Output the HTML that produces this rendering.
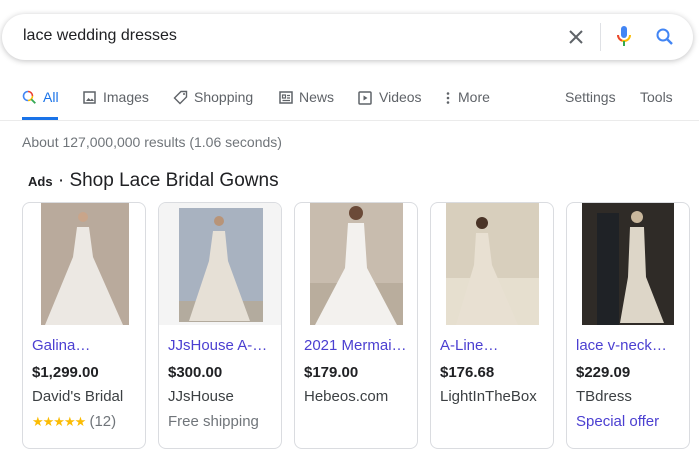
<!DOCTYPE html>
<html><head><meta charset="utf-8"><style>
*{margin:0;padding:0;box-sizing:border-box}
body{width:699px;height:461px;background:#fff;font-family:"Liberation Sans",Arial,sans-serif;position:relative;overflow:hidden;color:#202124}
.abs{position:absolute}
.search{left:2px;top:14px;width:691px;height:46px;border-radius:23px;box-shadow:0 1px 6px rgba(32,33,36,.28);background:#fff}
.tab{top:89px;font-size:14px;color:#5f6368;white-space:nowrap}
.card{top:202px;width:124px;height:247px;border:1px solid #dadce0;border-radius:8px;overflow:hidden;background:#fff}
.card .img{position:absolute;top:0}
.card .t{position:absolute;left:9px;top:134px;font-size:15px;color:#4b3fd1;white-space:nowrap}
.card .p{position:absolute;left:9px;top:161px;font-size:15px;font-weight:bold;color:#202124}
.card .s{position:absolute;left:9px;top:185px;font-size:15px;color:#3c4043;white-space:nowrap}
.card .e{position:absolute;left:9px;top:210px;font-size:15px;color:#70757a;white-space:nowrap}
</style></head><body>
<div class="abs search"></div>
<div class="abs" style="left:23px;top:27px;font-size:16px;color:#202124;white-space:nowrap">lace wedding dresses</div>
<svg class="abs" style="left:567px;top:28px" width="18" height="18" viewBox="0 0 18 18"><path d="M3 3L15 15M15 3L3 15" stroke="#5f6368" stroke-width="2"/></svg>
<div class="abs" style="left:600px;top:23px;width:1px;height:28px;background:#dfe1e5"></div>
<svg class="abs" style="left:616px;top:25px" width="16" height="24" viewBox="0 0 16 24"><rect x="5" y="1" width="6" height="12" rx="3" fill="#4285f4"/><path d="M2 10a6 6 0 0 0 12 0" stroke="#fbbc05" stroke-width="2" fill="none"/><path d="M8 16v5" stroke="#34a853" stroke-width="2"/><path d="M2 10a6 6 0 0 0 4 5.6" stroke="#ea4335" stroke-width="2" fill="none"/></svg>
<svg class="abs" style="left:655px;top:27px" width="20" height="20" viewBox="0 0 20 20"><circle cx="8" cy="8" r="5.5" stroke="#4285f4" stroke-width="2" fill="none"/><path d="M12 12l5 5" stroke="#4285f4" stroke-width="2.4"/></svg>

<svg class="abs" style="left:22px;top:90px" width="15" height="15" viewBox="0 0 15 15"><path d="M6 1.5a4.5 4.5 0 1 0 0 9" stroke="#4285f4" stroke-width="1.6" fill="none"/><path d="M6 1.5a4.5 4.5 0 0 1 4.5 4.5" stroke="#ea4335" stroke-width="1.6" fill="none"/><path d="M10.5 6a4.5 4.5 0 0 1-4.5 4.5" stroke="#fbbc05" stroke-width="1.6" fill="none"/><path d="M9.3 9.3l4 4" stroke="#34a853" stroke-width="1.8"/></svg>
<div class="abs tab" style="left:43px;color:#1a73e8">All</div>
<div class="abs" style="left:22px;top:117px;width:36px;height:3px;background:#1a73e8"></div>
<svg class="abs" style="left:83px;top:91px" width="13" height="13" viewBox="0 0 13 13"><rect x="1" y="1" width="11" height="11" fill="none" stroke="#5f6368" stroke-width="1.5"/><path d="M3 10l2.5-3 2 2 1.5-1.5 2 2.5z" fill="#5f6368"/></svg>
<div class="abs tab" style="left:103px">Images</div>
<svg class="abs" style="left:173px;top:90px" width="15" height="15" viewBox="0 0 15 15"><path d="M8 1.5h5.5V7L7 13.5 1.5 8z" fill="none" stroke="#5f6368" stroke-width="1.4"/><circle cx="11" cy="4" r="1" fill="#5f6368"/></svg>
<div class="abs tab" style="left:194px">Shopping</div>
<svg class="abs" style="left:279px;top:91px" width="14" height="13" viewBox="0 0 14 13"><rect x="1" y="1" width="12" height="11" fill="none" stroke="#5f6368" stroke-width="1.5"/><path d="M3.5 4h3v3h-3zM8 4.5h3M8 7h3M3.5 9.5h7.5" stroke="#5f6368" stroke-width="1.2" fill="none"/></svg>
<div class="abs tab" style="left:299px">News</div>
<svg class="abs" style="left:358px;top:91px" width="14" height="14" viewBox="0 0 14 14"><rect x="1" y="1" width="12" height="12" rx="1" fill="none" stroke="#5f6368" stroke-width="1.5"/><path d="M5.5 4.5v5l4-2.5z" fill="#5f6368"/></svg>
<div class="abs tab" style="left:379px">Videos</div>
<svg class="abs" style="left:446px;top:91px" width="4" height="14" viewBox="0 0 4 14"><circle cx="2" cy="2.5" r="1.3" fill="#5f6368"/><circle cx="2" cy="7" r="1.3" fill="#5f6368"/><circle cx="2" cy="11.5" r="1.3" fill="#5f6368"/></svg>
<div class="abs tab" style="left:458px">More</div>
<div class="abs tab" style="left:565px">Settings</div>
<div class="abs tab" style="left:640px">Tools</div>
<div class="abs" style="left:0;top:120px;width:699px;height:1px;background:#ebebeb"></div>

<div class="abs" style="left:22px;top:134px;font-size:14px;color:#70757a;white-space:nowrap">About 127,000,000 results (1.06 seconds)</div>
<div class="abs" style="left:28px;top:170px;font-size:19px;color:#202124;white-space:nowrap"><span style="font-size:13px;font-weight:bold">Ads</span> · Shop Lace Bridal Gowns</div>

<div class="abs card" style="left:22px">
<svg class="img" style="left:18px" width="88" height="122"><rect width="88" height="122" fill="#b9aa9c"/><circle cx="42" cy="14" r="5" fill="#c9a58a"/><path d="M36 24h12l4 30 30 68H4l28-68z" fill="#ece8e3"/></svg>
<div class="t">Galina…</div><div class="p">$1,299.00</div><div class="s">David's Bridal</div>
<div class="e"><span style="color:#fbbc04;font-size:13px;letter-spacing:-1px">★★★★★</span> (12)</div></div>

<div class="abs card" style="left:158px">
<svg class="img" style="left:0" width="124" height="122"><rect width="124" height="122" fill="#f4f4f4"/><rect x="20" y="5" width="84" height="114" fill="#a8b2c0"/><rect x="20" y="98" width="84" height="21" fill="#b3ab9e"/><circle cx="60" cy="18" r="5" fill="#b89478"/><path d="M54 28h12l3 30 22 60H30l20-60z" fill="#e6e0d6"/></svg>
<div class="t">JJsHouse A-…</div><div class="p">$300.00</div><div class="s">JJsHouse</div><div class="e">Free shipping</div></div>

<div class="abs card" style="left:294px">
<svg class="img" style="left:15px" width="93" height="122"><rect width="93" height="122" fill="#c8bcae"/><rect y="80" width="93" height="42" fill="#b9ad9d"/><circle cx="46" cy="10" r="7" fill="#6b4a38"/><path d="M38 20h16l3 45 30 57H5l30-57z" fill="#f3f1ee"/></svg>
<div class="t">2021 Mermai…</div><div class="p">$179.00</div><div class="s">Hebeos.com</div></div>

<div class="abs card" style="left:430px">
<svg class="img" style="left:15px" width="93" height="122"><rect width="93" height="122" fill="#d8cfbd"/><rect y="75" width="93" height="47" fill="#e6dfcf"/><circle cx="36" cy="20" r="6" fill="#4a3427"/><path d="M30 30h12l4 32 26 60H10l18-60z" fill="#e8e0d2"/></svg>
<div class="t">A-Line…</div><div class="p">$176.68</div><div class="s">LightInTheBox</div></div>

<div class="abs card" style="left:566px">
<svg class="img" style="left:15px" width="92" height="122"><rect width="92" height="122" fill="#2f2b27"/><rect x="15" y="10" width="22" height="112" fill="#1f2226"/><circle cx="55" cy="14" r="6" fill="#c9b79c"/><path d="M48 24h14l2 50 18 46H38l8-46z" fill="#ddd6c8"/></svg>
<div class="t">lace v-neck…</div><div class="p">$229.09</div><div class="s">TBdress</div><div class="e" style="color:#4b3fd1">Special offer</div></div>
</body></html>
